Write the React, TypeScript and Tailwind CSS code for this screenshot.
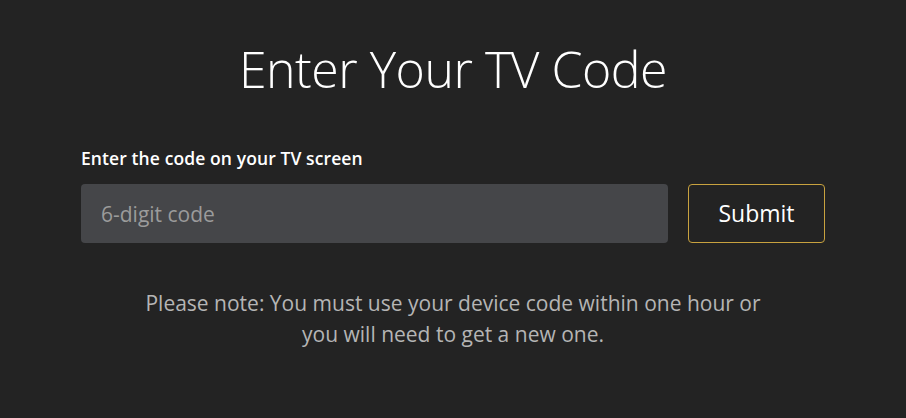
export default function App() {
  return (
    <div
      className="min-h-[418px] w-full bg-[#232323] text-white"
      style={{ fontFamily: '"Open Sans", "Noto Sans", sans-serif' }}
    >
      <div className="mx-auto flex w-[744px] flex-col pt-[36px]">
        <h1 className="text-center text-[50px] font-light leading-[66px] tracking-[-0.5px] text-white">
          Enter Your TV Code
        </h1>

        <label className="mt-[44px] text-[17.5px] font-semibold leading-[24px] tracking-[0.1px] text-white">
          Enter the code on your TV screen
        </label>
        <div className="mt-[14px] flex gap-[20px]">
          <input
            type="text"
            placeholder="6-digit code"
            className="h-[59px] flex-1 rounded-[4px] bg-[#454649] px-[20px] text-[21px] text-white outline-none placeholder:text-[#9b9b9b]"
          />
          <button className="h-[59px] w-[137px] rounded-[4px] border border-[#c8a23f] text-[23px] text-white">
            Submit
          </button>
        </div>

        <p className="mx-auto mt-[45px] w-[630px] text-center text-[21px] leading-[31px] text-[#b5b5b5]">
          Please note: You must use your device code within one hour or
          you will need to get a new one.
        </p>
      </div>
    </div>
  )
}
